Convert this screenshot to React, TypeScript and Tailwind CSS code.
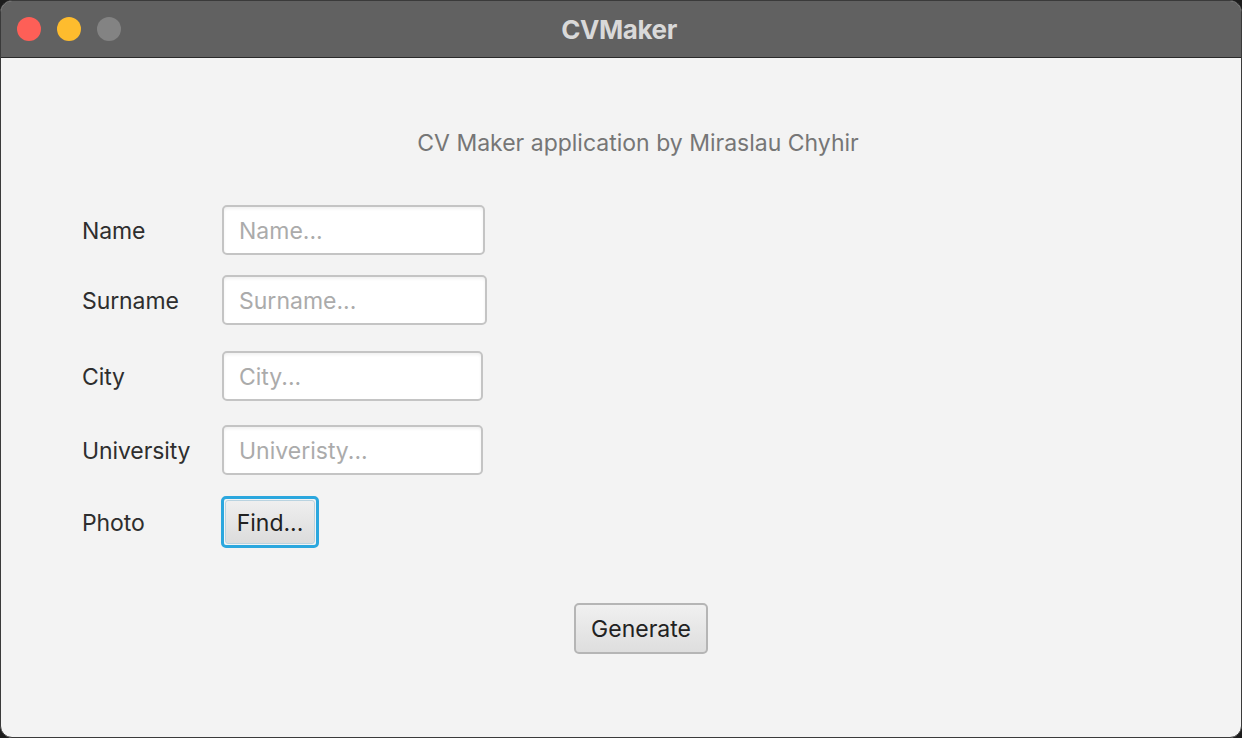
import React from "react";

const fields = [
  { label: "Name", placeholder: "Name...", w: "w-[263px]", mt: "mt-0" },
  { label: "Surname", placeholder: "Surname...", w: "w-[265px]", mt: "mt-[20px]" },
  { label: "City", placeholder: "City...", w: "w-[261px]", mt: "mt-[26px]" },
  { label: "University", placeholder: "Univeristy...", w: "w-[261px]", mt: "mt-[24px]" },
];

export default function App() {
  return (
    <div className="w-[1242px] h-[738px] bg-[#1c1c1c]" style={{ fontFamily: 'Inter, "Liberation Sans", Arial, sans-serif' }}>
      <div className="w-full h-full rounded-[12px] overflow-hidden flex flex-col bg-[#f3f3f3] border border-[#3a3a3a]">
        {/* title bar */}
        <div className="h-[57px] shrink-0 bg-[#616161] border-b border-[#2a2a2a] flex items-center relative">
          <div className="flex items-center gap-[16px] pl-[16px]">
            <span className="w-[24px] h-[24px] rounded-full bg-[#fe5f57]" />
            <span className="w-[24px] h-[24px] rounded-full bg-[#febc2e]" />
            <span className="w-[24px] h-[24px] rounded-full bg-[#838383]" />
          </div>
          <div className="absolute inset-0 flex items-center justify-center pointer-events-none">
            <span className="text-[26px] font-bold text-[#d9d9d9] tracking-[-0.4px] -ml-[4px]">CVMaker</span>
          </div>
        </div>

        {/* content */}
        <div className="flex-1 flex flex-col">
          <div className="mt-[72px] text-center pl-[34px] text-[23px] leading-[27px] text-[#767676]">
            CV Maker application by Miraslau Chyhir
          </div>

          <div className="mt-[48px] pl-[81px] flex flex-col">
            {fields.map((f) => (
              <div key={f.label} className={`flex items-center ${f.mt}`}>
                <div className="w-[140px] pt-[3px] text-[23px] text-[#2e2e2e] tracking-[-0.1px]">{f.label}</div>
                <div
                  className={`${f.w} h-[50px] rounded-[5px] border-2 border-[#c4c4c4] bg-white flex items-center pl-[15px] pt-[2px] text-[23px] text-[#ababab] shadow-[inset_0_2px_3px_rgba(0,0,0,0.06)]`}
                >
                  {f.placeholder}
                </div>
              </div>
            ))}
            <div className="flex items-center mt-[21px]">
              <div className="w-[140px] pt-[3px] text-[23px] text-[#2e2e2e] tracking-[-0.1px]">Photo</div>
              <div className="w-[98px] h-[52px] rounded-[5px] border-[3px] border-[#2ba7de] p-[1px] -ml-[1px]">
                <div className="w-full h-full rounded-[3px] border border-[#b9d3e0] bg-gradient-to-b from-[#efefef] to-[#dcdcdc] flex items-center justify-center pt-[2px] text-[23px] text-[#222]">
                  Find...
                </div>
              </div>
            </div>
          </div>

          <div className="mt-[55px] flex justify-center pl-[40px]">
            <div className="w-[134px] h-[51px] rounded-[5px] border-2 border-[#b5b5b5] bg-gradient-to-b from-[#f0f0f0] to-[#dedede] flex items-center justify-center pt-[2px] text-[23px] text-[#222]">
              Generate
            </div>
          </div>
        </div>
      </div>
    </div>
  );
}
